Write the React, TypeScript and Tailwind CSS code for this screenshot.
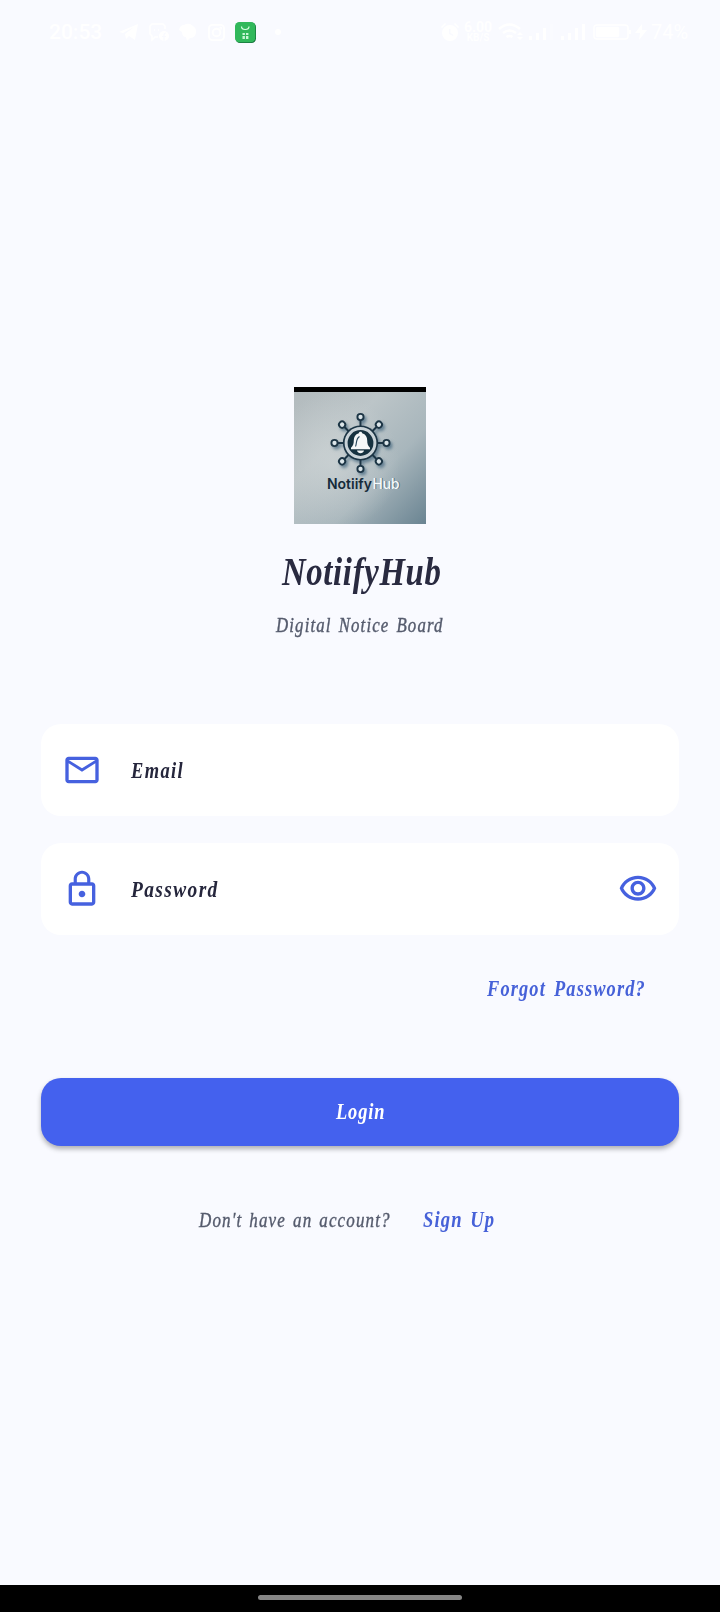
import type { ReactNode } from "react";

const script = "font-['Liberation_Serif',serif] italic whitespace-nowrap inline-block origin-left";

function StatusBar() {
  return (
    <header className="flex h-16 shrink-0 items-center justify-between pl-[49px] pr-[29px] text-white">
      <div className="flex items-center">
        <span className="w-[68px] text-[21px] leading-none font-medium">20:53</span>
        <svg className="ml-[2px] h-5 w-5" viewBox="0 0 20 20" fill="currentColor">
          <path d="M0 10 19 2 16 18 10 14 7 17 6 12 15 5 4 11Z" />
        </svg>
        <svg className="ml-[10px] h-5 w-5" viewBox="0 0 20 20" fill="none" stroke="currentColor" strokeWidth="1.5">
          <path d="M9 15H6l-3 3v-4L1 12V4l2-2h11l2 2v3M5 8h1M9 8h1" />
          <circle cx="15" cy="14" r="5" fill="currentColor" stroke="none" />
          <path d="M15 19v-6q0-2 2-2M13 14.500h4" stroke="#f9faff" strokeWidth="1.200" />
        </svg>
        <svg className="ml-[9px] h-5 w-5" viewBox="0 0 20 20" fill="currentColor">
          <path d="M1 8Q2 3 6 3q5-3 9 1 4 3 3 7-1 5-6 5l-3 3-1-4q-4 0-4-5Z" />
        </svg>
        <svg className="ml-[9px] h-[19px] w-[19px]" viewBox="0 0 20 20" fill="none" stroke="currentColor" strokeWidth="2">
          <rect x="2" y="2" width="16" height="16" rx="4" />
          <circle cx="10" cy="10" r="4" />
          <circle cx="14.5" cy="5.5" r=".5" />
        </svg>
        <svg className="ml-[9px] h-[21px] w-[21px]" viewBox="0 0 21 21">
          <rect x=".5" y=".5" width="20.5" height="20.5" rx="4.5" fill="#16713b" />
          <rect width="20.3" height="20.3" rx="4.5" fill="#31b85b" />
          <path d="M6.5 4.5c0 4 7.5 4 7.5 0" fill="none" stroke="#d9ffe5" strokeWidth="1.2" />
          <path d="M7.5 11h2.4v2H7.5ZM11 11h2.4v2H11ZM7.5 14h2.4v3H7.5ZM11 14h2.4v3H11Z" fill="#c9f7d7" />
        </svg>
        <span className="ml-[19px] h-[6px] w-[6px] rounded-full bg-white" />
      </div>
      <div className="flex items-center">
        <svg className="h-5 w-5" viewBox="0 0 20 20" fill="currentColor">
          <path fillRule="evenodd" d="M10 3a8 8 0 1 1 0 16 8 8 0 0 1 0-16Zm-1 4v5l4 2 .6-1L10.5 11V7Z" />
          <path d="m1 5 4-4 1 1-4 4ZM19 5l-4-4-1 1 4 4Z" />
        </svg>
        <div className="ml-[3px] w-[30px] text-center leading-none font-bold">
          <div className="text-[14px] leading-[11px]">6.00</div>
          <div className="text-[10px] leading-[10px]">KB/S</div>
        </div>
        <svg className="ml-[5px] h-5 w-[25px]" viewBox="0 0 25 20" fill="none" stroke="currentColor" strokeWidth="2.6">
          <path d="M1 7q10.500-9 21 0M5 11q6.500-5 13 0M8.500 15q3-2 6 0" />
          <path d="m19 13 3-3 3 3ZM19 15l3 3 3-3Z" fill="currentColor" stroke="none" />
        </svg>
        <svg className="ml-[6px] h-4 w-[25px]" viewBox="0 0 25 16" fill="currentColor">
          <path d="M0 12h3v4H0ZM7 9h3v7H7ZM14 4h3v12h-3Z" />
          <path d="M21 0h3v16h-3Z" opacity=".25" />
        </svg>
        <svg className="ml-[7px] h-4 w-[25px]" viewBox="0 0 25 16" fill="currentColor">
          <path d="M0 12h3v4H0ZM7 9h3v7H7ZM14 4h3v12h-3ZM21 0h3v16h-3Z" />
        </svg>
        <svg className="ml-[7px] h-4 w-[39px]" viewBox="0 0 39 16" fill="none" stroke="currentColor" strokeWidth="1.5">
          <rect x="1" y="1" width="34" height="14" rx="3" />
          <rect x="3.500" y="3.500" width="22" height="9" rx="1" fill="currentColor" />
          <path d="M37 6v4" strokeWidth="2" />
        </svg>
        <svg className="ml-[3px] h-4 w-3" viewBox="0 0 12 16" fill="currentColor">
          <path d="M7 0 0 9h5l-1 7 8-10H7Z" />
        </svg>
        <span className="ml-1 w-10 text-[20px] leading-none">74%</span>
      </div>
    </header>
  );
}

const spokes = [0, 45, 90, 135, 180, 225, 270, 315];

function Logo() {
  return (
    <svg className="h-[137px] w-[132px] shrink-0" viewBox="0 0 132 137">
      <defs>
        <linearGradient id="plate" x1="0" y1="0" x2="1" y2="1">
          <stop offset="0" stopColor="#b2babd" />
          <stop offset=".35" stopColor="#bcc5c8" />
          <stop offset=".65" stopColor="#a8b6bc" />
          <stop offset="1" stopColor="#6a8492" />
        </linearGradient>
        <radialGradient id="glow" cx=".3" cy=".55" r=".5">
          <stop offset="0" stopColor="#cfd5d6" stopOpacity=".7" />
          <stop offset="1" stopColor="#cfd5d6" stopOpacity="0" />
        </radialGradient>
        <filter id="shade" x="-20%" y="-20%" width="150%" height="150%">
          <feDropShadow dx="2" dy="2.500" stdDeviation="1.800" floodColor="#4a6b81" floodOpacity=".75" />
        </filter>
      </defs>
      <rect width="132" height="137" fill="url(#plate)" />
      <rect width="132" height="137" fill="url(#glow)" />
      <rect width="132" height="5" fill="#000" />
      <g filter="url(#shade)">
        {spokes.map((a) => (
          <g key={a} transform={`rotate(${a} 66.500 56)`} stroke="#1c3444">
            <path d="M66.500 40V33" strokeWidth="2" />
            <circle cx="66.500" cy="30" r="3.100" fill="#dbe5e9" strokeWidth="1.900" />
          </g>
        ))}
        <circle cx="66.500" cy="56" r="17.600" fill="#1c3444" />
        <circle cx="66.500" cy="56" r="14.400" fill="#193141" stroke="#c9d3d8" strokeWidth="3" />
      </g>
      <path
        d="M66.500 44.800c1 0 1.700.6 1.700 1.500 3.500 1 5 3.800 5 7 0 3.800.8 5.500 2.800 7.500v1.500H57v-1.500c2-2 2.800-3.700 2.800-7.500 0-3.200 1.500-6 5-7 0-.9.7-1.500 1.700-1.500ZM63 63.500h7c-.8 3.500-6.200 3.500-7 0Z"
        fill="#f4f7f8"
      />
      <path d="M61.500 59.500c1.500-3 0-7.500 4-10" fill="none" stroke="#29485c" strokeWidth="1.100" />
      <g fontFamily="Inter, sans-serif" fontSize="14">
        <text x="33" y="101.500" fontWeight="600" fill="#142b3b" textLength="45" lengthAdjust="spacingAndGlyphs">Notiify</text>
        <text x="79.500" y="102.300" fontWeight="500" fill="#557383" textLength="27" lengthAdjust="spacingAndGlyphs">Hub</text>
        <text x="78.500" y="101.500" fontWeight="500" fill="#f5fafc" textLength="27" lengthAdjust="spacingAndGlyphs">Hub</text>
      </g>
    </svg>
  );
}

function Field({ icon, label, trailing }: { icon: ReactNode; label: ReactNode; trailing?: ReactNode }) {
  return (
    <div className="flex h-[92px] items-center rounded-[20px] bg-white pr-[21px] pl-[21px]">
      {icon}
      <div className="-mt-px ml-[29px] flex-1 text-[#25263c]">{label}</div>
      {trailing}
    </div>
  );
}

export default function App() {
  return (
    <div className="flex h-[1612px] w-[720px] flex-col overflow-hidden bg-[#f9faff] font-['Roboto',sans-serif]">
      <StatusBar />
      <main className="flex flex-1 flex-col px-[41px] pt-[323px]">
        <div className="flex flex-col items-center">
          <Logo />
          <h1 className="mt-[19px] h-[56px] w-[156px] text-[#292a40]">
            <span className={`${script} scale-x-[0.8] text-[41px] leading-[56px] font-bold tracking-[0.8px]`}>NotiifyHub</span>
          </h1>
          <p className="mt-[12px] h-7 w-[168px] text-[#555b6d]">
            <span className={`${script} scale-x-[0.82] text-[20.5px] leading-7 tracking-[1.4px] [-webkit-text-stroke:0.4px] [word-spacing:2px]`}>Digital Notice Board</span>
          </p>
        </div>
        <form className="mt-[85px] flex flex-col">
          <Field
            icon={
              <svg className="h-10 w-10" viewBox="0 0 24 24" fill="#4661df">
                <path d="M22 6c0-1.100-.9-2-2-2H4c-1.100 0-2 .9-2 2v12c0 1.100.9 2 2 2h16c1.100 0 2-.9 2-2V6zm-2 0-8 5-8-5h16zm0 12H4V8l8 5 8-5v10z" />
              </svg>
            }
            label={<span className={`${script} scale-x-[0.77] text-[24px] leading-8 font-bold tracking-[1.8px]`}>Email</span>}
          />
          <div className="h-[27px]" />
          <Field
            icon={
              <svg className="h-10 w-10" viewBox="0 0 24 24" fill="#4661df">
                <path d="M12 17c1.100 0 2-.9 2-2s-.9-2-2-2-2 .9-2 2 .9 2 2 2zm6-9h-1V6c0-2.760-2.240-5-5-5S7 3.240 7 6v2H6c-1.100 0-2 .9-2 2v10c0 1.100.9 2 2 2h12c1.100 0 2-.9 2-2V10c0-1.100-.9-2-2-2zM8.900 6c0-1.710 1.390-3.100 3.100-3.100s3.100 1.390 3.100 3.100v2H8.900V6zM18 20H6V10h12v10z" />
              </svg>
            }
            label={<span className={`${script} scale-x-[0.81] text-[24px] leading-8 font-bold tracking-[1.7px]`}>Password</span>}
            trailing={
              <svg className="h-10 w-10" viewBox="0 0 24 24" fill="#4661df">
                <path d="M12 6c3.790 0 7.170 2.130 8.820 5.500C19.170 14.870 15.790 17 12 17s-7.170-2.130-8.820-5.500C4.830 8.130 8.210 6 12 6m0-2C7 4 2.730 7.110 1 11.500 2.730 15.890 7 19 12 19s9.270-3.110 11-7.500C21.270 7.110 17 4 12 4zm0 5c1.380 0 2.500 1.120 2.500 2.500S13.380 14 12 14s-2.500-1.120-2.500-2.500S10.620 9 12 9m0-2c-2.480 0-4.500 2.020-4.500 4.500S9.520 16 12 16s4.500-2.020 4.500-4.500S14.480 7 12 7z" />
              </svg>
            }
          />
          <a className="mt-[38px] mr-[32px] h-8 w-[160px] self-end text-[#4661d8]">
            <span className={`${script} scale-x-[0.8] text-[23px] leading-8 font-bold tracking-[1.4px] [word-spacing:3px]`}>Forgot Password?</span>
          </a>
          <button
            type="button"
            className="mt-[73px] flex h-[68px] justify-center rounded-[20px] bg-[#4461ee] pt-[18px] text-white shadow-[0_3px_5px_rgba(0,0,0,0.3)]"
          >
            <span className="w-[49px] text-left">
              <span className={`${script} scale-x-[0.8] text-[23px] leading-8 font-bold tracking-[1.1px]`}>Login</span>
            </span>
          </button>
        </form>
        <div className="mt-[58px] flex pl-[158px]">
          <p className="h-8 w-[224px] text-[#555b6d]">
            <span className={`${script} scale-x-[0.81] text-[21px] leading-8 tracking-[1.4px] [word-spacing:2px] [-webkit-text-stroke:0.4px]`}>Don't have an account?</span>
          </p>
          <a className="h-8 w-[71px] text-[#4661d8]">
            <span className={`${script} scale-x-[0.81] text-[23px] leading-8 font-bold tracking-[1.4px] [word-spacing:2px]`}>Sign Up</span>
          </a>
        </div>
      </main>
      <footer className="flex h-[27px] shrink-0 justify-center bg-black pt-[10px]">
        <div className="h-[5px] w-[204px] rounded-full bg-[#858585]" />
      </footer>
    </div>
  );
}
